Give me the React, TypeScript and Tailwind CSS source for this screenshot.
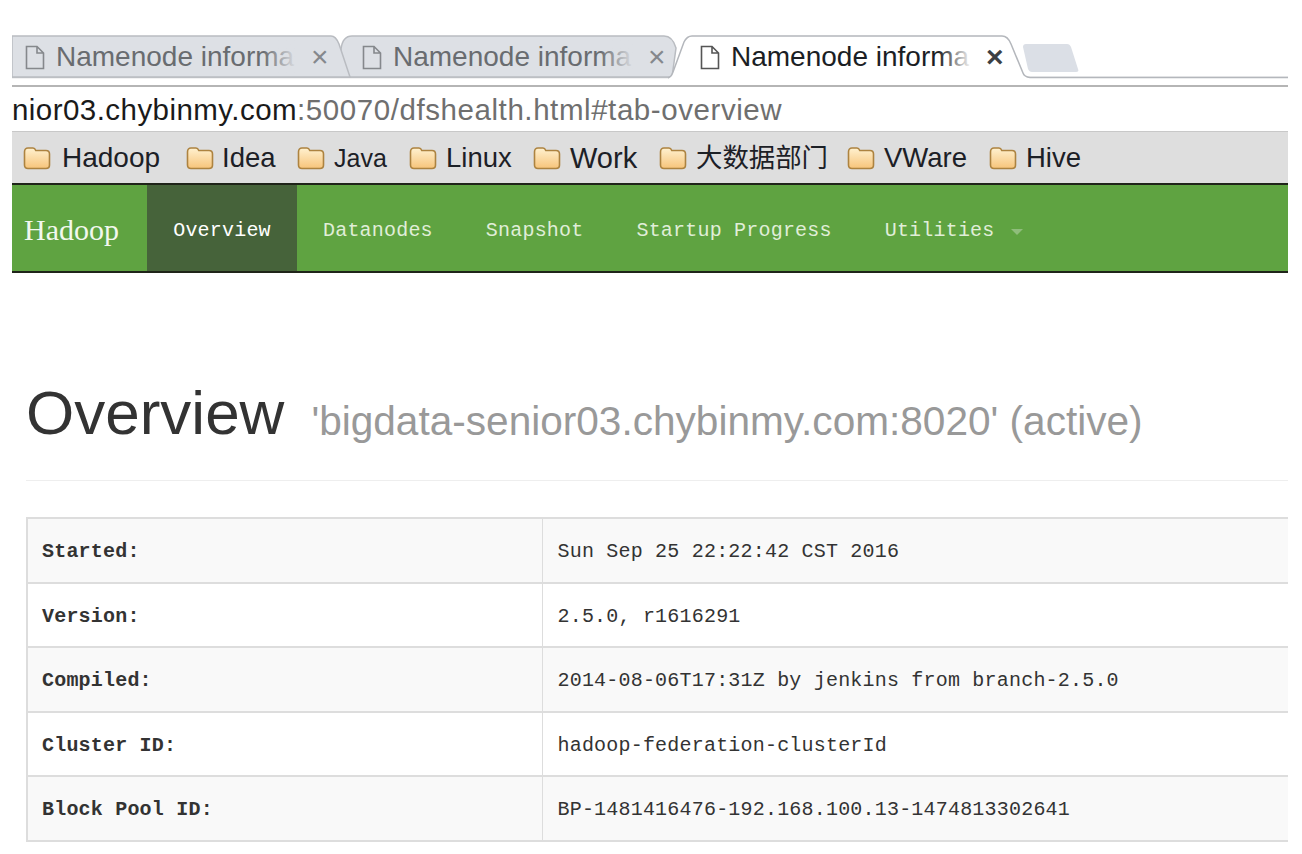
import React from "react";

const bookmarks = [
  { label: "Hadoop", width: "w-[163px] gap-[11px]", text: "text-[28px]" },
  { label: "Idea", width: "w-[111px] gap-[8px]", text: "text-[27.5px]" },
  { label: "Java", width: "w-[112px] gap-[9px]", text: "text-[25px]" },
  { label: "Linux", width: "w-[124px] gap-[9px]", text: "text-[27.5px]" },
  { label: "Work", width: "w-[126px] gap-[9px]", text: "text-[29px]" },
  { label: "大数据部门", width: "w-[188px] gap-[9px]", text: "text-[26.4px]" },
  { label: "VWare", width: "w-[142px] gap-[9px]", text: "text-[27.5px]" },
  { label: "Hive", width: "w-[100px] gap-[9px]", text: "text-[27.5px]" },
];
const navItems = ["Datanodes", "Snapshot", "Startup Progress"];
const rows = [
  ["Started:", "Sun Sep 25 22:22:42 CST 2016"],
  ["Version:", "2.5.0, r1616291"],
  ["Compiled:", "2014-08-06T17:31Z by jenkins from branch-2.5.0"],
  ["Cluster ID:", "hadoop-federation-clusterId"],
  ["Block Pool ID:", "BP-1481416476-192.168.100.13-1474813302641"],
];

function DocIcon({ dark }: { dark?: boolean }) {
  return (
    <svg width="20" height="25" viewBox="0 0 20 25" className="shrink-0">
      <path
        d="M1.500 1.500h10.500l6.500 6.500v15.500h-17z M12 1.500v6.500h6.500"
        fill={dark ? "#fff" : "none"}
        stroke={dark ? "#555" : "#85888c"}
        strokeWidth="1.600"
      />
    </svg>
  );
}

function Folder() {
  return (
    <svg width="28" height="24" viewBox="0 0 28 24" className="shrink-0">
      <defs>
        <linearGradient id="fold" x1="0" y1="0" x2="0" y2="1">
          <stop offset="0" stopColor="#fff1cf" />
          <stop offset="1" stopColor="#f7c47a" />
        </linearGradient>
      </defs>
      <path
        d="M1.500 6c0-2.500 1.500-4 3.500-4h5c1.500 0 2.200 1 2.800 2.500H23c2.300 0 3.500 1.300 3.500 3.500v11c0 2.300-1.200 3.500-3.500 3.500H5c-2.300 0-3.500-1.200-3.500-3.500z"
        fill="url(#fold)"
        stroke="#ad8340"
        strokeWidth="1.600"
      />
    </svg>
  );
}

function Tab({ active }: { active?: boolean }) {
  return (
    <div className={`relative flex h-[42px] w-[337px] items-center pt-[2px] ${active ? "pl-[14px]" : "pl-[13px]"}`}>
      <DocIcon dark={active} />
      <div
        className={`relative ml-[11px] w-[241px] whitespace-nowrap text-[28px] leading-[34px] ${
          active ? "text-[#1b1e24]" : "text-[#696c70]"
        }`}
      >
        Namenode informa
        <div
          className={`absolute right-0 top-0 h-full w-[34px] bg-gradient-to-r from-transparent ${
            active ? "to-white" : "to-[#dde0e5]"
          }`}
        />
      </div>
      <span
        className={`ml-[14px] text-[30px] leading-[30px] ${active ? "font-bold text-[#3c3f44]" : "text-[#85888c]"}`}
      >
        ×
      </span>
    </div>
  );
}

export default function App() {
  return (
    <div className="h-[854px] w-full overflow-hidden bg-white pl-[12px] pr-[14px] pt-[35px] font-['Liberation_Sans','Noto_Sans_CJK_SC',sans-serif]">
      {/* tab strip */}
      <div className="relative flex h-[52px] border-b-2 border-[#b5b5b5]">
        <svg className="absolute left-0 top-0 h-[50px] w-[1276px]" viewBox="0 0 1276 50">
          <path d="M0 42.500H1276" stroke="#c6c8cb" strokeWidth="1.500" />
          <path
            d="M329 42V14C330 6 333 1 340 1H652C658 1 662 6 664 13L660 42Z"
            fill="#dde0e5"
            stroke="#b9bcc1"
            strokeWidth="1.500"
          />
          <path
            d="M0 1H319C323 1 325 4 327 9L338 42H0Z"
            fill="#dde0e5"
            stroke="#b9bcc1"
            strokeWidth="1.500"
          />
          <path
            d="M656 43C659 42 660 40 661 37L672 7C674 3 676 1 680 1H990C994 1 997 4 999 9L1011 38C1012 41 1014 42 1018 42.500H1276V50H656Z"
            fill="#ffffff"
          />
          <path
            d="M656 43C659 42 660 40 661 37L672 7C674 3 676 1 680 1H990C994 1 997 4 999 9L1011 38C1012 41 1014 42 1018 42.500H1276"
            fill="none"
            stroke="#b4b7bc"
            strokeWidth="1.500"
          />
          <path
            d="M1011 12C1011 10 1012 9 1014 9H1055C1057 9 1058 10 1059 12L1066 34C1067 36 1066 37 1064 37H1020C1018 37 1017 36 1016 34Z"
            fill="#dbdfe6"
          />
        </svg>
        <Tab />
        <Tab />
        <Tab active />
      </div>

      {/* address bar */}
      <div className="flex h-[44px] items-center overflow-hidden whitespace-nowrap pt-[2px] text-[29.5px] leading-none text-[#6f6f6f]">
        <span className="tracking-[0.45px] text-[#1a1a1a]">nior03.chybinmy.com</span>
        <span className="tracking-[0.57px]">:50070/dfshealth.html#tab-overview</span>
      </div>

      {/* bookmarks bar */}
      <div className="flex h-[52px] items-center border-t border-[#c8c8c8] bg-[#dedede] pl-[11px] pt-[1px]">
        {bookmarks.map((b) => (
          <div key={b.label} className={`flex items-center leading-none text-[#1c2026] ${b.width} ${b.text}`}>
            <Folder />
            <span className="whitespace-nowrap">{b.label}</span>
          </div>
        ))}
      </div>

      {/* navbar */}
      <div className="flex h-[90px] items-stretch border-y-2 border-[#1f2419] bg-[#5fa341] font-['Liberation_Mono',monospace] text-[20px] tracking-[0.2px] text-[#e0eed8]">
        <div className="flex w-[135px] items-center pl-[12px] pt-[2px] font-['Liberation_Serif',serif] text-[30px] tracking-normal text-[#f2f8ee]">
          Hadoop
        </div>
        <div className="flex w-[150px] items-center justify-center bg-[#46633a] pt-[6px] text-white">Overview</div>
        <div className="flex items-center gap-[53px] pl-[26px] pt-[6px]">
          {navItems.map((n) => (
            <span key={n}>{n}</span>
          ))}
          <span className="flex items-center gap-[16px]">
            Utilities
            <span className="mt-[2px] h-0 w-0 border-x-[6px] border-t-[6px] border-x-transparent border-t-[#8fbd7b]" />
          </span>
        </div>
      </div>

      {/* page heading */}
      <div className="ml-[14px] mt-[102px] flex h-[106px] items-start gap-[27px] whitespace-nowrap border-b border-[#eeeeee]">
        <h1 className="text-[62px] leading-[76px] text-[#333333]">Overview</h1>
        <span className="mt-[21px] text-[40.6px] leading-[50px] text-[#999999]">
          'bigdata-senior03.chybinmy.com:8020' (active)
        </span>
      </div>

      {/* info table */}
      <table className="ml-[14px] mt-[36px] w-[1262px] table-fixed border-collapse font-['Liberation_Mono',monospace] text-[20px] tracking-[0.2px] text-[#333333]">
        <tbody>
          {rows.map(([k, v], i) => (
            <tr key={k} className={`h-[64.5px] ${i % 2 === 0 ? "bg-[#f9f9f9]" : "bg-white"}`}>
              <th className="w-[515px] border-2 border-r border-[#dddddd] pl-[14px] pt-[4px] text-left font-bold">{k}</th>
              <td className="border-y-2 border-l border-[#dddddd] pl-[15px] pt-[4px]">{v}</td>
            </tr>
          ))}
        </tbody>
      </table>
    </div>
  );
}
